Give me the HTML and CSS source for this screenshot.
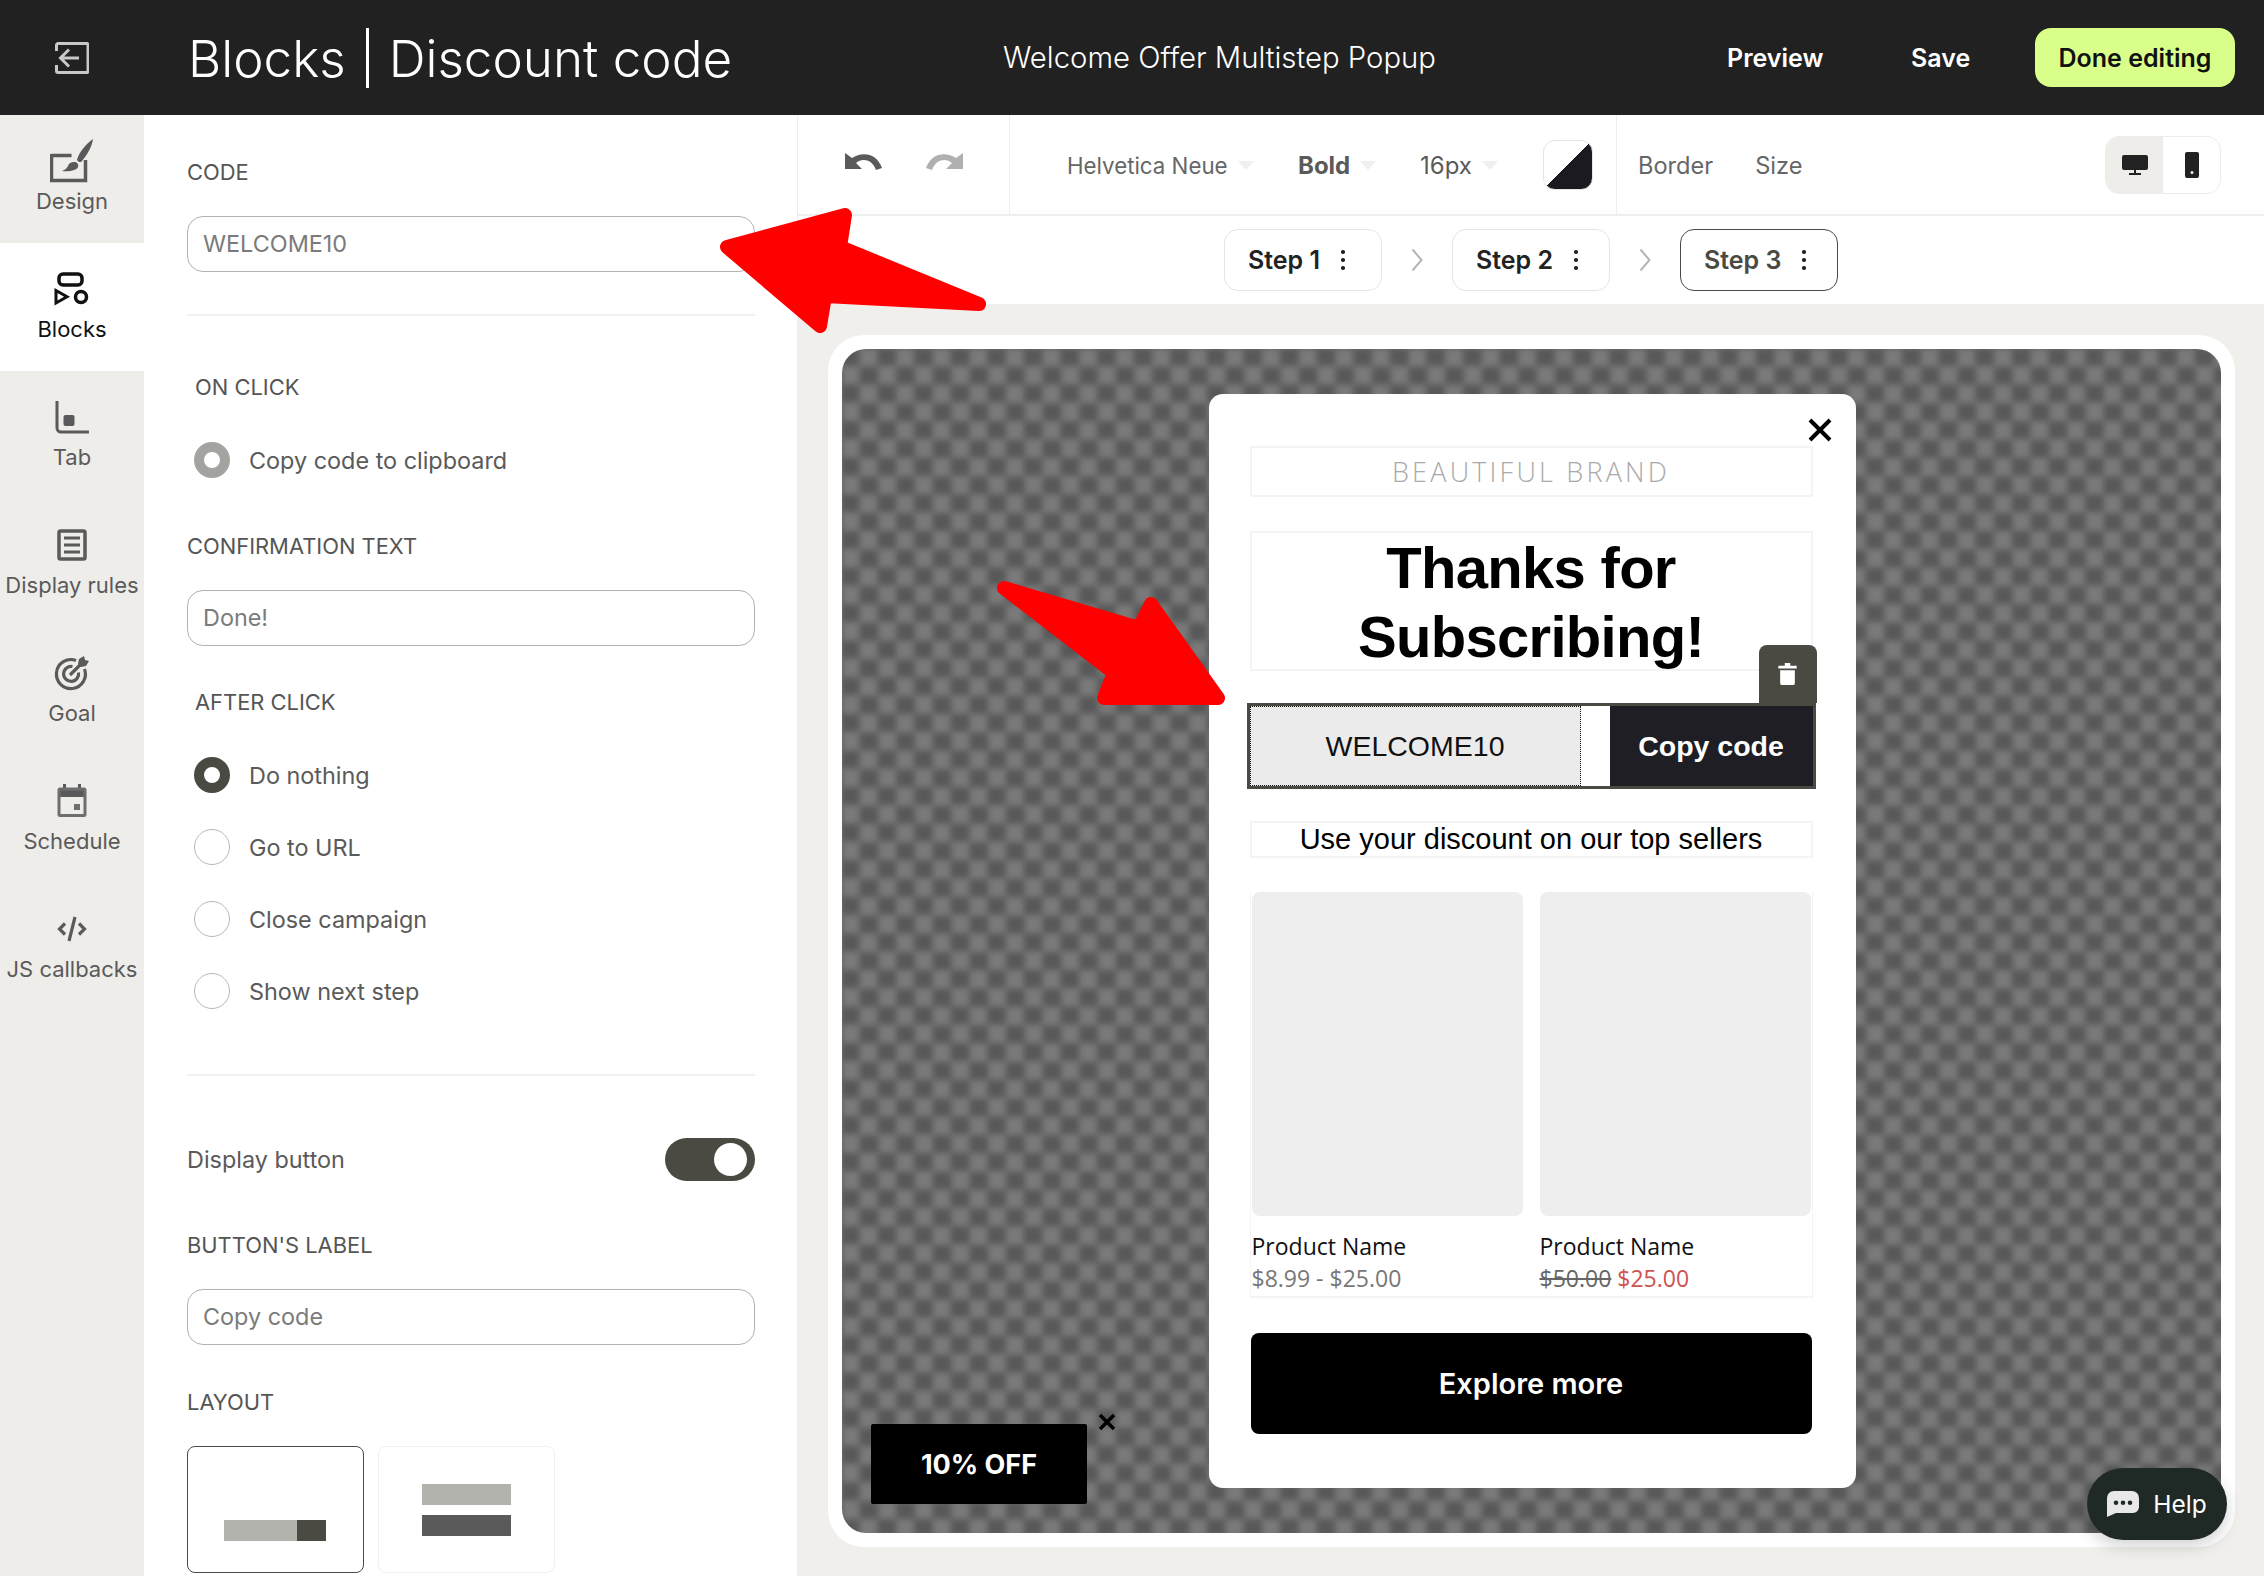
FILE: index.html
```html
<!DOCTYPE html>
<html lang="en">
<head>
  <meta charset="UTF-8" />
  <title>Blocks | Discount code</title>
  <link rel="stylesheet" href="styles.css">
</head>
<body>
  <div class="app">
    <header class="topbar">
      <div class="back">
        <svg width="34" height="32" viewBox="0 0 34 32" fill="none"><path d="M1.500 9V3a1.500 1.500 0 0 1 1.500-1.500h29a1.500 1.500 0 0 1 1 1.500v26a1.500 1.500 0 0 1-1 1.500H3A1.500 1.500 0 0 1 1.500 29v-6" stroke="#c8c8c8" stroke-width="3"/><path d="M24 16H6M14 7.500 5.500 16l8.500 8.500" stroke="#c8c8c8" stroke-width="3"/></svg>
      </div>
      <h1 class="page-title"><span>Blocks</span><i class="title-sep"></i><span>Discount code</span></h1>
      <div class="campaign">Welcome Offer Multistep Popup</div>
      <a class="top-link top-preview">Preview</a>
      <a class="top-link top-save">Save</a>
      <button class="done-btn">Done editing</button>
    </header>

    <div class="workspace">
      <nav class="sidenav">
        <a class="nav-item">
          <span class="nav-icon"><svg width="44" height="44" viewBox="0 0 44 44"><path d="M1.500 16.500h20M1.500 15v26.500h34V21" fill="none" stroke="#5a5a5a" stroke-width="3.500"/><path d="M43 0C42 7 38 15 32 22c-1 2-4 1-5-1C29 13 36 5 43 0zM24 23c3 0 5 2 4 5-1 3-8 5-16 4 3-1 5-3 6-5 1-3 3-4 6-4z" fill="#5a5a5a"/></svg></span>
          <span>Design</span>
        </a>
        <a class="nav-item active">
          <span class="nav-icon"><svg width="36" height="34" viewBox="0 0 36 34" fill="none" stroke="#111" stroke-width="3.500"><rect x="5" y="2" width="23" height="11" rx="4"/><path d="M2 18.500v12.500l11-6.300z" stroke-width="3"/><circle cx="27" cy="25" r="5.500"/></svg></span>
          <span>Blocks</span>
        </a>
        <a class="nav-item">
          <span class="nav-icon"><svg width="34" height="34" viewBox="0 0 34 34" fill="none"><path d="M2 1v27a4 4 0 0 0 4 4h28" stroke="#5a5a5a" stroke-width="3"/><rect x="8.500" y="15" width="11" height="11" rx="2" fill="#5a5a5a"/></svg></span>
          <span>Tab</span>
        </a>
        <a class="nav-item">
          <span class="nav-icon"><svg width="30" height="32" viewBox="0 0 30 32" fill="none" stroke="#5a5a5a"><rect x="2" y="2" width="26" height="28" rx="1.500" stroke-width="3.500"/><path d="M7 9h16M7 16h16M7 23h16" stroke-width="3"/></svg></span>
          <span>Display rules</span>
        </a>
        <a class="nav-item">
          <span class="nav-icon"><svg width="36" height="36" viewBox="0 0 36 36" fill="none" stroke="#5a5a5a" stroke-width="3.200"><path d="M22 5.500A14.500 14.500 0 1 0 30.500 14"/><path d="M18.500 11.500a7.500 7.500 0 1 0 6 6"/><path d="M16 20 26 10"/><path d="M24 9l1-5 5-3 1 4 4 1-3 5-5 1z" fill="#5a5a5a" stroke="none"/></svg></span>
          <span>Goal</span>
        </a>
        <a class="nav-item">
          <span class="nav-icon"><svg width="30" height="33" viewBox="0 0 30 33" fill="none"><path d="M6 0h3v4h12V0h3v4h5v9H1V4h5z" fill="#5a5a5a"/><rect x="2" y="5" width="26" height="26.500" rx="1" stroke="#6e6e6e" stroke-width="3"/><rect x="17" y="20" width="6" height="6" fill="#6e6e6e"/></svg></span>
          <span>Schedule</span>
        </a>
        <a class="nav-item">
          <span class="nav-icon"><svg width="30" height="26" viewBox="0 0 30 26" fill="none" stroke="#5a5a5a" stroke-width="3.200"><path d="M8 7.500 2.500 13 8 18.500M22 7.500l5.500 5.500-5.500 5.500M18 1l-6 24"/></svg></span>
          <span>JS callbacks</span>
        </a>
      </nav>

      <aside class="panel">
        <div class="field-label code-label">CODE</div>
        <div class="text-input">WELCOME10</div>
        <hr class="divider first" />

        <div class="field-label group-label onclick-label">ON CLICK</div>
        <label class="radio-row first-radio"><i class="radio muted"></i>Copy code to clipboard</label>

        <div class="field-label confirm-label">CONFIRMATION TEXT</div>
        <div class="text-input">Done!</div>

        <div class="field-label group-label after-label">AFTER CLICK</div>
        <div class="radio-list">
          <label class="radio-row"><i class="radio on"></i>Do nothing</label>
          <label class="radio-row"><i class="radio"></i>Go to URL</label>
          <label class="radio-row"><i class="radio"></i>Close campaign</label>
          <label class="radio-row"><i class="radio"></i>Show next step</label>
        </div>
        <hr class="divider second" />

        <div class="toggle-row">
          <span>Display button</span>
          <span class="toggle"><i></i></span>
        </div>

        <div class="field-label btn-label">BUTTON'S LABEL</div>
        <div class="text-input">Copy code</div>

        <div class="field-label layout-label">LAYOUT</div>
        <div class="layout-opts">
          <div class="layout-card selected">
            <div class="inline-bar"><i></i></div>
          </div>
          <div class="layout-card stacked">
            <div class="bar-light"></div>
            <div class="bar-dark"></div>
          </div>
        </div>
      </aside>

      <main class="editor">
        <div class="toolbar">
          <div class="history">
            <svg width="38" height="18" viewBox="0 0 38 18" fill="none"><path d="M0 0v16h17l-6-6c6-5 16-4 20 7l6-2C32 0 17-2 7 5z" fill="#5a5a5a"/></svg>
            <svg width="38" height="18" viewBox="0 0 38 18" fill="none"><path d="M38 0v16H21l6-6c-6-5-16-4-20 7l-6-2C6 0 21-2 31 5z" fill="#b0b0b0"/></svg>
          </div>
          <div class="font-tools">
            <span class="font-pick font-name">Helvetica Neue<i class="caret"></i></span>
            <span class="font-pick font-weight">Bold<i class="caret"></i></span>
            <span class="font-pick font-size">16px<i class="caret"></i></span>
            <span class="swatch"></span>
          </div>
          <div class="box-tools">
            <span>Border</span>
            <span>Size</span>
          </div>
          <div class="device-switch">
            <span class="device current">
              <svg width="26" height="20" viewBox="0 0 26 20"><path d="M0 2a2 2 0 0 1 2-2h22a2 2 0 0 1 2 2v11a2 2 0 0 1-2 2H2a2 2 0 0 1-2-2zM12 15h2v3h5v2H7v-2h5z" fill="#222"/></svg>
            </span>
            <span class="device">
              <svg width="14" height="26" viewBox="0 0 14 26"><path fill-rule="evenodd" d="M2 0h10a2 2 0 0 1 2 2v22a2 2 0 0 1-2 2H2a2 2 0 0 1-2-2V2a2 2 0 0 1 2-2zm3.500 20.500a1.500 1.500 0 1 0 3 0 1.500 1.500 0 0 0-3 0z" fill="#222"/></svg>
            </span>
          </div>
        </div>

        <div class="steps">
          <div class="step">Step 1<span class="dots"></span></div>
          <svg class="step-arrow" width="12" height="24" viewBox="0 0 12 24" fill="none"><path d="M1.500 1.500 10.500 12l-9 10.500" stroke="#b5b5b5" stroke-width="2"/></svg>
          <div class="step">Step 2<span class="dots"></span></div>
          <svg class="step-arrow" width="12" height="24" viewBox="0 0 12 24" fill="none"><path d="M1.500 1.500 10.500 12l-9 10.500" stroke="#b5b5b5" stroke-width="2"/></svg>
          <div class="step current">Step 3<span class="dots"></span></div>
        </div>

        <div class="stage">
          <div class="frame">
            <div class="checker">
              <div class="popup">
                <svg class="popup-close" width="24" height="24" viewBox="0 0 24 24"><path d="M2 2l20 20M22 2 2 22" stroke="#000" stroke-width="4"/></svg>
                <div class="block brand">BEAUTIFUL BRAND</div>
                <div class="block heading">Thanks for<br>Subscribing!</div>
                <div class="code-block">
                  <span class="trash-tab">
                    <svg width="19" height="22" viewBox="0 0 20 24"><path d="M7 0h6v3h7v3H0V3h7zM2 8h16v14a2 2 0 0 1-2 2H4a2 2 0 0 1-2-2z" fill="#fff"/></svg>
                  </span>
                  <div class="code-value">WELCOME10</div>
                  <div class="code-btn">Copy code</div>
                </div>
                <div class="block subtext">Use your discount on our top sellers</div>
                <div class="products">
                  <div class="product">
                    <div class="thumb"></div>
                    <div class="prod-name">Product Name</div>
                    <div class="prod-price">$8.99 - $25.00</div>
                  </div>
                  <div class="product">
                    <div class="thumb"></div>
                    <div class="prod-name">Product Name</div>
                    <div class="prod-price"><s>$50.00</s> <em>$25.00</em></div>
                  </div>
                </div>
                <div class="explore">Explore more</div>
              </div>
              <div class="teaser">10% OFF</div>
              <svg class="teaser-close" width="18" height="18" viewBox="0 0 18 18"><path d="M2 2l14 14M16 2 2 16" stroke="#000" stroke-width="3.500"/></svg>
            </div>
          </div>
        </div>
      </main>
    </div>

    <div class="help">
      <svg width="32" height="26" viewBox="0 0 32 26"><path fill-rule="evenodd" d="M0 7a7 7 0 0 1 7-7h18a7 7 0 0 1 7 7v9a6 6 0 0 1-6 6H9l-9 4zm9 2.500a2.300 2.300 0 1 0 0 4.600 2.300 2.300 0 0 0 0-4.600zm7 0a2.300 2.300 0 1 0 0 4.600 2.300 2.300 0 0 0 0-4.600zm7 0a2.300 2.300 0 1 0 0 4.600 2.300 2.300 0 0 0 0-4.600z" fill="#e8e8e8"/></svg>
      <span>Help</span>
    </div>

    <svg class="arrows" width="2264" height="1576" viewBox="0 0 2264 1576">
      <path d="M727 247 845 215 840 247 979 304 825 296 820 326Z" fill="#f00" stroke="#f00" stroke-width="14" stroke-linejoin="round"/>
      <path d="M1004 588 1139 628 1151 604 1218 698 1104 698 1114 673Z" fill="#f00" stroke="#f00" stroke-width="14" stroke-linejoin="round"/>
    </svg>
  </div>
</body>
</html>
```

FILE: styles.css
```css
* {
  box-sizing: border-box;
}
body {
  margin: 0;
  font-family: "Inter", "Liberation Sans", sans-serif;
  color: #5a5a5a;
  background: #fff;
}
.app {
  position: relative;
  width: 2264px;
  height: 1576px;
  overflow: hidden;
}

/* top bar */
.topbar {
  height: 115px;
  background: #212121;
  color: #fff;
  display: flex;
  align-items: center;
}
.back {
  width: 144px;
  display: flex;
  justify-content: center;
}
.page-title {
  margin: 0 0 0 44px;
  width: 815px;
  display: flex;
  align-items: center;
  font-size: 51.2px;
  font-weight: 300;
}
.title-sep {
  width: 3px;
  height: 60px;
  background: #fff;
  margin: 0 20px;
}
.campaign {
  width: 724px;
  font-size: 29.3px;
  font-weight: 300;
}
.top-link {
  font-size: 25px;
  font-weight: 600;
}
.top-preview {
  width: 184px;
}
.top-save {
  width: 124px;
}
.done-btn {
  width: 200px;
  height: 59px;
  border: none;
  border-radius: 16px;
  background: #d9ff8a;
  color: #111;
  font: 600 25px "Inter", sans-serif;
  padding: 0;
}

.workspace {
  display: flex;
  height: 1461px;
}

/* left nav */
.sidenav {
  width: 144px;
  background: #eeede9;
  display: flex;
  flex-direction: column;
}
.nav-item {
  height: 128px;
  display: flex;
  flex-direction: column;
  align-items: center;
  font-size: 22px;
  line-height: 26px;
  white-space: nowrap;
}
.nav-icon {
  height: 91px;
  margin-bottom: -18px;
  display: flex;
  align-items: center;
}
.nav-icon svg {
  display: block;
}
.nav-item.active {
  background: #fff;
  color: #111;
}

/* settings panel */
.panel {
  width: 654px;
  padding: 42px 42px 0 43px;
  border-right: 1px solid #ececec;
}
.field-label {
  font-size: 21.9px;
  line-height: 30px;
  color: #555;
}
.group-label {
  padding-left: 8px;
}
.text-input {
  height: 56px;
  margin-top: 29px;
  border: 1.5px solid #b2b2b0;
  border-radius: 16px;
  padding: 0 15px 1px;
  display: flex;
  align-items: center;
  font-size: 23.4px;
  color: #7b7b7b;
}
.divider {
  border: none;
  height: 2px;
  margin: 0;
  background: #f0f0ed;
}
.divider.first {
  margin-top: 42px;
}
.divider.second {
  margin-top: 65px;
}
.onclick-label {
  margin-top: 56px;
}
.first-radio {
  margin-top: 40px;
}
.confirm-label {
  margin-top: 53px;
}
.after-label {
  margin-top: 41px;
}
.radio-list {
  margin-top: 40px;
  display: flex;
  flex-direction: column;
  gap: 36px;
}
.radio-row {
  display: flex;
  align-items: center;
  height: 36px;
  padding-left: 7px;
  font-size: 23.4px;
  color: #5a5a5a;
}
.radio {
  width: 36px;
  height: 36px;
  border-radius: 50%;
  border: 1.5px solid #b7b7b4;
  margin-right: 19px;
}
.radio.on {
  border: 10px solid #4a4a42;
}
.radio.muted {
  border: 10px solid #a3a39f;
}
.toggle-row {
  margin-top: 62px;
  display: flex;
  justify-content: space-between;
  align-items: center;
  font-size: 23.4px;
}
.toggle {
  width: 90px;
  height: 43px;
  border-radius: 22px;
  background: #4a4a42;
  display: flex;
  align-items: center;
  justify-content: flex-end;
  padding-right: 8px;
}
.toggle i {
  width: 33px;
  height: 33px;
  border-radius: 50%;
  background: #fff;
}
.btn-label {
  margin-top: 49px;
}
.layout-label {
  margin-top: 42px;
}
.layout-opts {
  margin-top: 29px;
  display: flex;
  gap: 14px;
}
.layout-card {
  width: 177px;
  height: 127px;
  border-radius: 8px;
  border: 1.5px solid #f0f0ed;
}
.layout-card.selected {
  border-color: #4a4a42;
  padding: 73px 0 0 36px;
}
.inline-bar {
  width: 102px;
  height: 21px;
  background: #b3b3ae;
  display: flex;
  justify-content: flex-end;
}
.inline-bar i {
  width: 29px;
  background: #4a4a42;
}
.layout-card.stacked {
  padding: 37px 43px 0;
}
.bar-light,
.bar-dark {
  height: 21px;
  background: #b3b3ae;
}
.bar-dark {
  margin-top: 10px;
  background: #5a5a5a;
}

/* editor */
.editor {
  flex: 1;
  display: flex;
  flex-direction: column;
  background: #f0efeb;
}
.toolbar {
  height: 101px;
  background: #fff;
  border-bottom: 2px solid #eeeeee;
  display: flex;
  align-items: center;
}
.history {
  width: 212px;
  height: 100%;
  border-right: 1px solid #eeeeee;
  padding: 38px 0 0 47px;
  display: flex;
  align-items: flex-start;
  gap: 42px;
}
.font-tools {
  width: 607px;
  height: 100%;
  border-right: 1px solid #eeeeee;
  display: flex;
  align-items: center;
  padding: 2px 0 0 57px;
}
.font-pick {
  display: flex;
  align-items: center;
  font-size: 24px;
}
.font-name {
  width: 231px;
  font-size: 22.3px;
  color: #666;
}
.font-weight {
  width: 122px;
  font-weight: 700;
}
.font-size {
  width: 123px;
}
.caret {
  width: 0;
  height: 0;
  margin-left: 10px;
  border-left: 8px solid transparent;
  border-right: 8px solid transparent;
  border-top: 9px solid #efefef;
}
.swatch {
  width: 50px;
  height: 50px;
  margin-top: -2px;
  border-radius: 12px;
  border: 1px solid #e4e4e4;
  background: linear-gradient(to bottom right, #fff 50%, #1a1a20 50%);
}
.box-tools {
  width: 488px;
  padding: 2px 0 0 21px;
  display: flex;
  gap: 42px;
  font-size: 23.6px;
  color: #666;
}
.device-switch {
  width: 116px;
  height: 58px;
  border: 1.5px solid #ececec;
  border-radius: 14px;
  display: flex;
  overflow: hidden;
}
.device {
  flex: 1;
  display: flex;
  align-items: center;
  justify-content: center;
}
.device.current {
  background: #eeede9;
}

.steps {
  height: 88px;
  background: #fff;
  display: flex;
  align-items: center;
  justify-content: center;
  gap: 29px;
}
.step {
  width: 158px;
  height: 62px;
  border: 1.5px solid #e4e4e4;
  border-radius: 14px;
  display: flex;
  align-items: center;
  padding-left: 23px;
  font-size: 25px;
  font-weight: 600;
  color: #222;
}
.step.current {
  border-color: #4a4a42;
  color: #4a4a42;
}
.dots {
  width: 3.500px;
  height: 3.500px;
  margin-left: 21px;
  border-radius: 50%;
  background: #222;
  box-shadow: 0 -8px 0 #222, 0 8px 0 #222;
}
.step-arrow {
  flex: none;
}

/* canvas */
.stage {
  flex: 1;
  padding: 31px 29px 29px 30px;
}
.frame {
  height: 100%;
  background: #fff;
  border-radius: 36px;
  padding: 14px;
}
.checker {
  position: relative;
  height: 100%;
  border-radius: 24px;
  overflow: hidden;
  display: flex;
  justify-content: center;
  align-items: flex-start;
}
.checker::before {
  content: "";
  position: absolute;
  inset: -36px;
  background: conic-gradient(#585858 25%, #7a7a7a 0 50%, #585858 0 75%, #7a7a7a 0) 17px 35px / 36.6px 36.6px;
  filter: blur(3px);
}
.popup {
  position: relative;
  width: 647px;
  margin: 45px 0 0 1px;
  padding: 52px 43px 54px 41px;
  background: #fff;
  border-radius: 14px;
}
.popup-close {
  position: absolute;
  top: 24px;
  right: 24px;
}
.block {
  border: 2px solid #f4f4f4;
  text-align: center;
  color: #000;
  font-family: "Liberation Sans", Arial, sans-serif;
}
.brand {
  height: 51px;
  line-height: 47px;
  font-family: "Open Sans", sans-serif;
  font-size: 27px;
  font-weight: 300;
  letter-spacing: 3.2px;
  color: #a9a9a9;
}
.heading {
  height: 140px;
  margin-top: 34px;
  font-size: 58px;
  font-weight: 700;
  letter-spacing: -0.7px;
  line-height: 69px;
}
.code-block {
  position: relative;
  height: 86px;
  margin: 32px -3px 0;
  border: 3.500px solid #4a4a42;
  display: flex;
  background: #fff;
  font-family: "Liberation Sans", Arial, sans-serif;
  font-size: 28.5px;
}
.code-value {
  width: 331px;
  background: #ebebeb;
  border: 1px dotted #111;
  color: #111;
  display: flex;
  align-items: center;
  justify-content: center;
}
.code-btn {
  margin-left: 29px;
  flex: 1;
  background: #1e1e24;
  color: #fff;
  font-weight: 700;
  display: flex;
  align-items: center;
  justify-content: center;
}
.trash-tab {
  position: absolute;
  right: -4px;
  top: -61px;
  width: 58px;
  height: 58px;
  background: #4a4a42;
  border-radius: 8px 8px 0 0;
  display: flex;
  align-items: center;
  justify-content: center;
}
.subtext {
  height: 37px;
  margin-top: 32px;
  font-size: 29px;
  line-height: 33px;
}
.products {
  margin-top: 34px;
  display: grid;
  grid-template-columns: 1fr 1fr;
  gap: 17px;
  padding: 0 1px;
  height: 406px;
  border: 1px solid #f4f4f4;
  border-top: none;
  border-bottom-width: 2px;
}
.thumb {
  height: 324px;
  background: #eeeeee;
  border-radius: 8px;
}
.prod-name {
  margin-top: 15px;
  font-family: "Open Sans", sans-serif;
  font-size: 23px;
  line-height: 30px;
  color: #111;
}
.prod-price {
  margin-top: 2px;
  font-family: "Open Sans", sans-serif;
  font-size: 23px;
  line-height: 30px;
  color: #777;
}
.prod-price s {
  color: #666;
}
.prod-price em {
  font-style: normal;
  color: #d0524f;
}
.explore {
  height: 101px;
  margin: 35px 1px 0;
  background: #000;
  border-radius: 8px;
  color: #fff;
  font-size: 29px;
  font-weight: 600;
  display: flex;
  align-items: center;
  justify-content: center;
}
.teaser {
  position: absolute;
  left: 29px;
  top: 1075px;
  width: 216px;
  height: 80px;
  background: #000;
  color: #fff;
  border-radius: 2px;
  font-size: 27px;
  font-weight: 700;
  display: flex;
  align-items: center;
  justify-content: center;
}
.teaser-close {
  position: absolute;
  left: 256px;
  top: 1064px;
}
.help {
  position: absolute;
  left: 2087px;
  top: 1468px;
  width: 140px;
  height: 72px;
  border-radius: 36px;
  background: #1f2a26;
  color: #fff;
  font-size: 24.5px;
  display: flex;
  align-items: center;
  justify-content: center;
  gap: 14px;
  box-shadow: 0 6px 16px rgba(0, 0, 0, 0.18);
}
.arrows {
  position: absolute;
  left: 0;
  top: 0;
  pointer-events: none;
}
```
